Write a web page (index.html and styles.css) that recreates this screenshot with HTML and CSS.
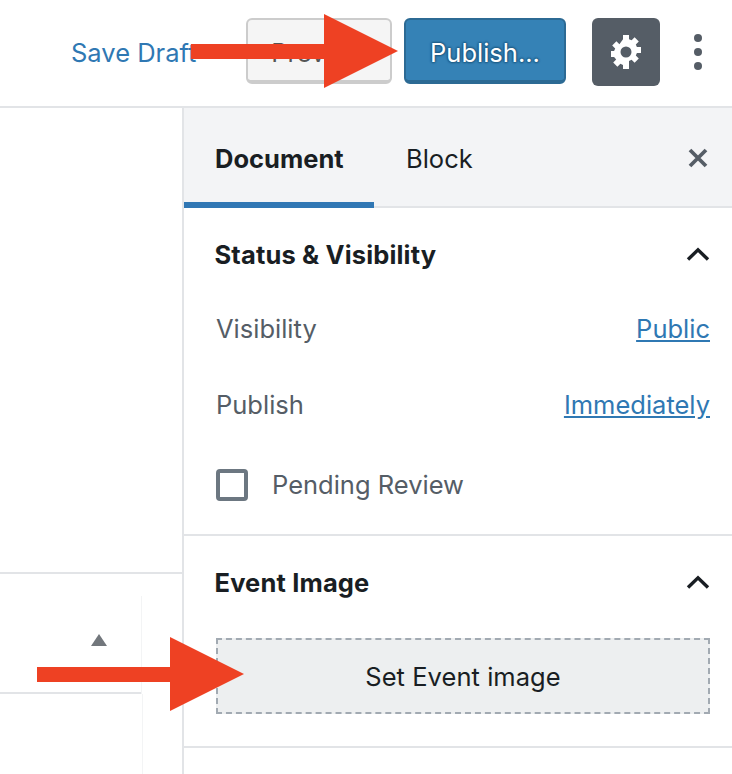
FILE: index.html
```html
<!DOCTYPE html>
<html lang="en">
<head>
<meta charset="utf-8">
<title>Event editor</title>
<link rel="stylesheet" href="styles.css">
</head>
<body>
<div class="page">
  <header class="topbar">
    <a class="save-draft">Save Draft</a>
    <button class="btn preview">Preview</button>
    <button class="btn publish">Publish...</button>
    <button class="btn gear" aria-label="Settings">
      <svg width="36" height="36" viewBox="0 0 36 36"><path fill="#fff" fill-rule="evenodd" d="M15 1h6v4.200l2.600 1.100 3-3 4.200 4.200-3 3 1.100 2.500H33v6h-4.100l-1.100 2.600 3 3-4.200 4.200-3-3-2.600 1.100V35h-6v-4.100l-2.600-1.100-3 3-4.200-4.200 3-3L6.100 23H3v-6h3.100l1.100-2.500-3-3 4.200-4.200 3 3L15 5.200V1zm3 11.500a5.500 5.500 0 1 0 0 11 5.500 5.500 0 0 0 0-11z"/></svg>
    </button>
    <div class="kebab"><i></i><i></i><i></i></div>
  </header>
  <main class="body">
    <section class="canvas">
      <div class="meta-panel">
        <div class="meta-head"><span class="tri"></span></div>
        <div class="meta-rest"></div>
      </div>
    </section>
    <aside class="sidebar">
      <div class="tabs">
        <span class="tab active">Document</span>
        <span class="tab">Block</span>
        <svg class="close" width="20" height="20" viewBox="0 0 20 20"><path d="M2 2l16 16M18 2L2 18" stroke="#555d66" stroke-width="3.800" fill="none"/></svg>
      </div>
      <div class="panel status">
        <div class="panel-head"><h2>Status &amp; Visibility</h2>
          <svg class="chev" width="24" height="14" viewBox="0 0 24 14"><path d="M2 12.500L12 2.800l10 9.700" stroke="#191e23" stroke-width="3.400" fill="none"/></svg></div>
        <div class="row first"><span>Visibility</span><a>Public</a></div>
        <div class="row"><span>Publish</span><a>Immediately</a></div>
        <label class="check"><span class="box"></span>Pending Review</label>
      </div>
      <div class="panel image">
        <div class="panel-head"><h2>Event Image</h2>
          <svg class="chev" width="24" height="14" viewBox="0 0 24 14"><path d="M2 12.500L12 2.800l10 9.700" stroke="#191e23" stroke-width="3.400" fill="none"/></svg></div>
        <button class="set-image">Set Event image</button>
      </div>
    </aside>
  </main>
  <svg class="arrow arrow-top" width="207" height="74" viewBox="0 0 207 74"><path fill="#ee4123" d="M0 30h133V0l74 37-74 37V45H0z"/></svg>
  <svg class="arrow arrow-bottom" width="207" height="74" viewBox="0 0 207 74"><path fill="#ee4123" d="M0 30h133V0l74 37-74 37V45H0z"/></svg>
</div>
</body>
</html>
```
FILE: styles.css
```css
* { box-sizing: border-box; }
html, body { margin: 0; padding: 0; background: #fff; }
body { font-family: Inter, "Liberation Sans", sans-serif; overflow: hidden; }
h2 { margin: 0; }
.page { position: relative; width: 732px; height: 774px; overflow: hidden; }

.topbar { height: 108px; border-bottom: 2px solid #e2e4e7; display: flex; align-items: flex-start; padding-top: 18px; }
.save-draft { margin-left: 71px; margin-top: 19px; width: 175px; font-size: 25.500px; line-height: 32px; color: #2f78b3; }
.btn { font-family: inherit; padding: 5px 0 0; border-radius: 6px; font-size: 25.500px; }
.preview { width: 146px; height: 66px; background: #f5f5f5; border: 2px solid #ccc; border-bottom-width: 4px; color: #555; }
.publish { width: 162px; height: 66px; margin-left: 12px; background: #3582b6; border: 2px solid #2c6a94; border-bottom-width: 4px; color: #fff; text-shadow: 0 -1px 2px #1f5c85, 1px 0 2px #1f5c85, 0 1px 2px #1f5c85, -1px 0 2px #1f5c85; }
.gear { width: 68px; height: 68px; margin-left: 26px; padding: 0; background: #555d66; border: 0; display: flex; align-items: center; justify-content: center; }
.kebab { margin-left: 30px; margin-top: 16px; width: 16px; display: flex; flex-direction: column; align-items: center; gap: 6px; }
.kebab i { width: 8px; height: 8px; border-radius: 50%; background: #555d66; }

.body { display: flex; height: 666px; }
.canvas { width: 184px; flex: none; border-right: 2px solid #e2e4e7; padding-top: 464px; }
.meta-panel { border-top: 2px solid #e2e4e7; }
.meta-head { position: relative; width: 142px; height: 120px; border-bottom: 2px solid #e2e4e7; }
.meta-head::after { content: ""; position: absolute; right: 0; top: 22px; bottom: -2px; width: 1px; background: #f3f4f5; }
.meta-rest { width: 143px; height: 80px; border-right: 1px solid #f3f4f5; }
.tri { position: absolute; left: 91px; top: 60px; border-left: 8px solid transparent; border-right: 8px solid transparent; border-bottom: 12px solid #72777c; }

.sidebar { flex: 1; min-width: 0; }
.tabs { position: relative; height: 100px; background: #f3f4f6; border-bottom: 2px solid #e2e4e7; display: flex; }
.tab { height: 100px; display: flex; align-items: center; padding-top: 0; font-size: 25.500px; color: #191e23; }
.tab:first-child { width: 190px; padding-left: 31px; font-weight: 700; border-bottom: 6px solid #3077b4; padding-top: 6px; }
.tab + .tab { margin-left: 32px; }
.close { position: absolute; right: 24px; top: 40px; }

.panel { border-bottom: 2px solid #e2e4e7; padding: 0 22px 0 32px; }
.status { height: 328px; }
.image { height: 212px; }
.panel-head { display: flex; justify-content: space-between; align-items: center; height: 94px; padding-bottom: 2px; }
.panel-head h2 { font-size: 25.500px; font-weight: 700; color: #191e23; margin-left: -1.500px; letter-spacing: .15px; }
.chev { margin-right: 0; margin-top: 0; }
.row { display: flex; justify-content: space-between; align-items: center; height: 76px; font-size: 25.500px; color: #555d66; }
.row.first { margin-top: -12px; }
.row a { color: #2f78b3; text-decoration: underline; }
.check { display: flex; align-items: center; height: 84px; font-size: 25.500px; color: #555d66; }
.box { width: 32px; height: 32px; margin: 2px 24px 0 0; border: 4px solid #6c7781; border-radius: 4px; }
.set-image { display: block; width: 494px; height: 76px; margin-top: 8px; padding: 0; font-family: inherit; font-size: 25.500px; letter-spacing: .05px; color: #191e23; background: #edeff0; border: 2px dashed #a2aab2; }

.arrow { position: absolute; display: block; }
.arrow-top { left: 191px; top: 14px; }
.arrow-bottom { left: 37px; top: 637px; }
```
